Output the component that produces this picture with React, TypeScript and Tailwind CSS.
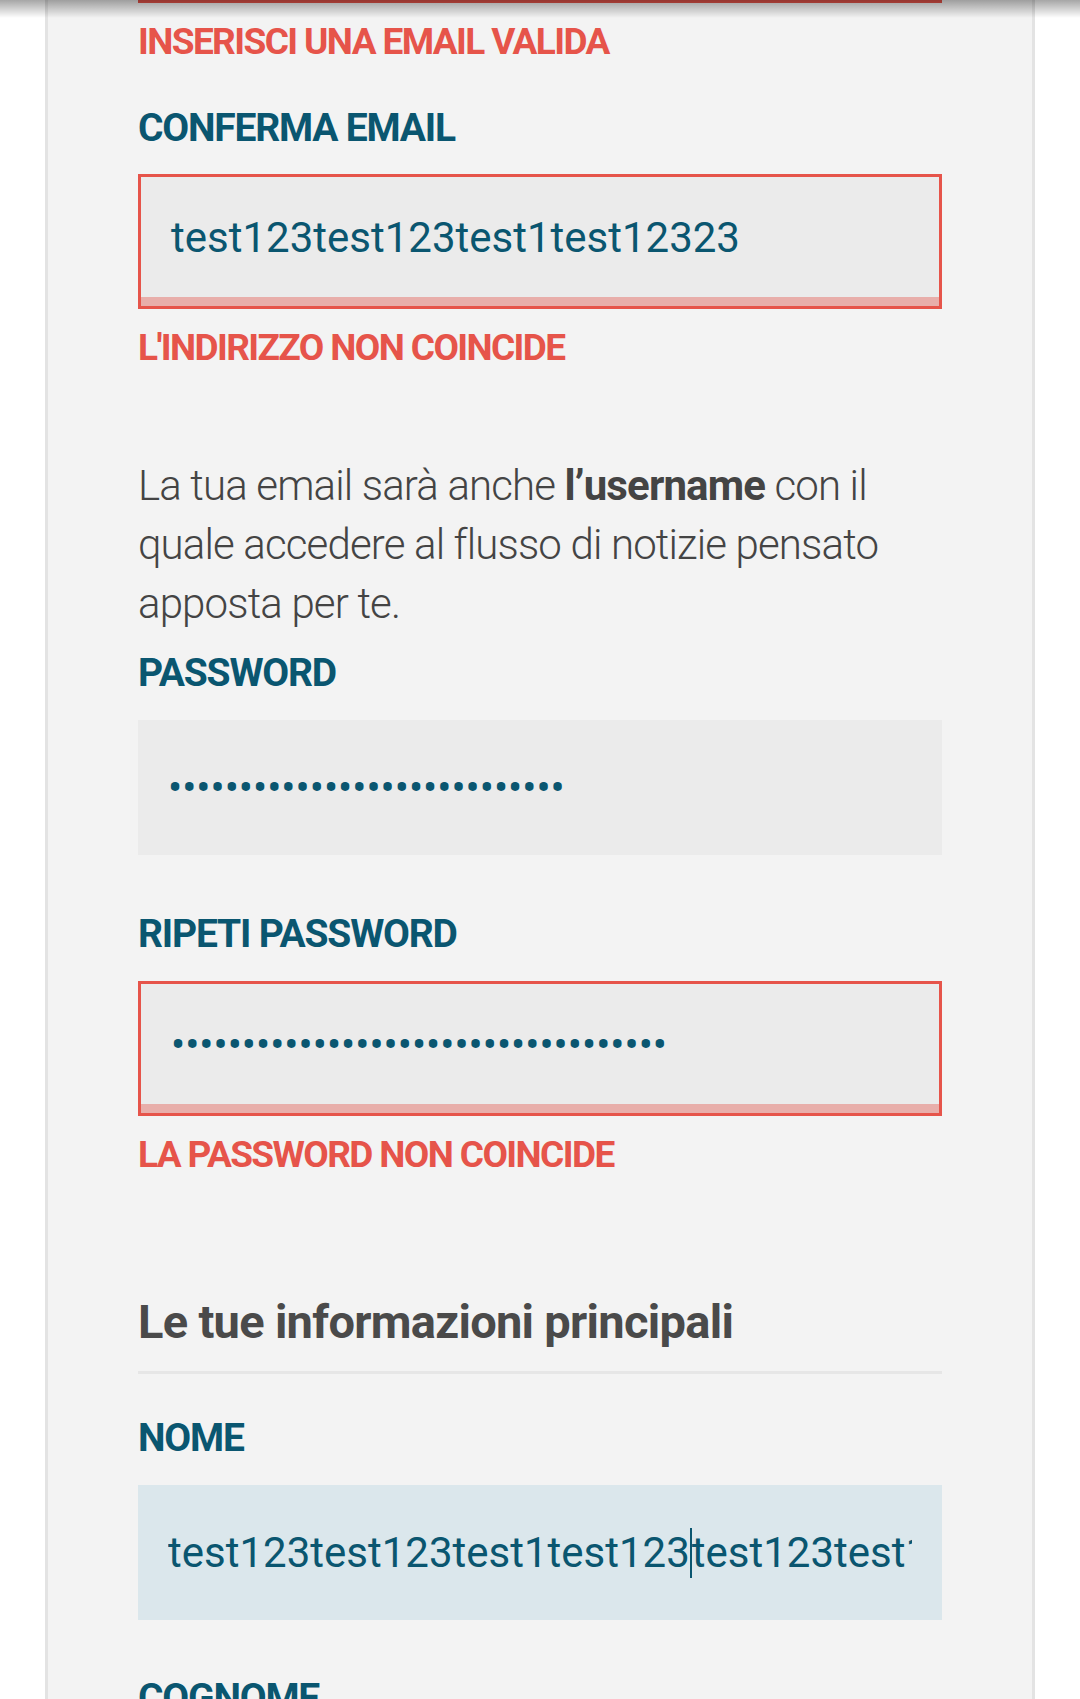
const labelCls = "text-[39px] leading-[39px] font-bold tracking-[-1.2px] text-[#0a5670] uppercase";
const errorCls = "text-[37px] leading-[39px] font-bold tracking-[-1.6px] text-[#e6544a] uppercase";
const dots = (n: number) => "•".repeat(n);

function Field({
  children,
  error,
  focused,
}: {
  children: React.ReactNode;
  error?: boolean;
  focused?: boolean;
}) {
  if (error) {
    return (
      <div className="h-[135px] border-[3px] border-[#e6544a] bg-[#ebebeb] flex flex-col">
        <div className="flex-1 flex items-center pl-[30px] text-[42px] text-[#0a5670] whitespace-nowrap overflow-hidden">
          {children}
        </div>
        <div className="h-[9px] bg-[#e8aeaa]"></div>
      </div>
    );
  }
  return (
    <div
      className={`h-[135px] flex items-center pl-[30px] pr-[30px] text-[42px] text-[#0a5670] ${
        focused ? "bg-[#dbe7ec]" : "bg-[#ebebeb]"
      }`}
    >
      <div className="overflow-hidden whitespace-nowrap flex items-center">{children}</div>
    </div>
  );
}

export default function App() {
  return (
    <main className="relative min-h-[1699px] bg-white font-['Roboto',sans-serif] overflow-hidden">
      {/* header shadow from the fixed top bar */}
      <div className="absolute top-0 inset-x-0 h-[18px] bg-gradient-to-b from-black/35 to-transparent pointer-events-none z-10"></div>

      <div className="mx-[45px] min-h-[1699px] bg-[#f3f3f3] border-x-[3px] border-[#e3e3e3] px-[90px]">
        {/* tail of the email input above */}
        <div className="h-[3px] bg-[#e6544a]"></div>
        <p className={`${errorCls} mt-[19px]`}>Inserisci una email valida</p>

        <p className={`${labelCls} mt-[48px]`}>Conferma email</p>
        <div className="mt-[26px]">
          <Field error>test123test123test1test12323</Field>
        </div>
        <p className={`${errorCls} mt-[19px]`}>L'indirizzo non coincide</p>

        <p className="mt-[90px] text-[42px] leading-[1.4] font-light tracking-[-0.85px] text-[#444444]">
          La tua email sarà anche <strong className="font-bold">l’username</strong> con il quale accedere al flusso
          di notizie pensato apposta per te.
        </p>

        <p className={`${labelCls} mt-[21px]`}>Password</p>
        <div className="mt-[27px]">
          <Field>{dots(28)}</Field>
        </div>

        <p className={`${labelCls} mt-[60px]`}>Ripeti password</p>
        <div className="mt-[27px]">
          <Field error>{dots(35)}</Field>
        </div>
        <p className={`${errorCls} mt-[19px]`}>La password non coincide</p>

        <h2 className="mt-[124px] text-[47px] leading-[48px] font-bold tracking-[-0.7px] text-[#4a4a4a]">
          Le tue informazioni principali
        </h2>
        <div className="mt-[25px] h-[3px] bg-[#e6e6e6]"></div>

        <p className={`${labelCls} mt-[45px]`}>Nome</p>
        <div className="mt-[27px]">
          <Field focused>
            <span>test123test123test1test123</span>
            <span className="inline-block shrink-0 w-[2px] h-[50px] bg-[#0a5670]"></span>
            <span>test123test123test123</span>
          </Field>
        </div>

        <p className={`${labelCls} mt-[59px]`}>Cognome</p>
      </div>
    </main>
  );
}
